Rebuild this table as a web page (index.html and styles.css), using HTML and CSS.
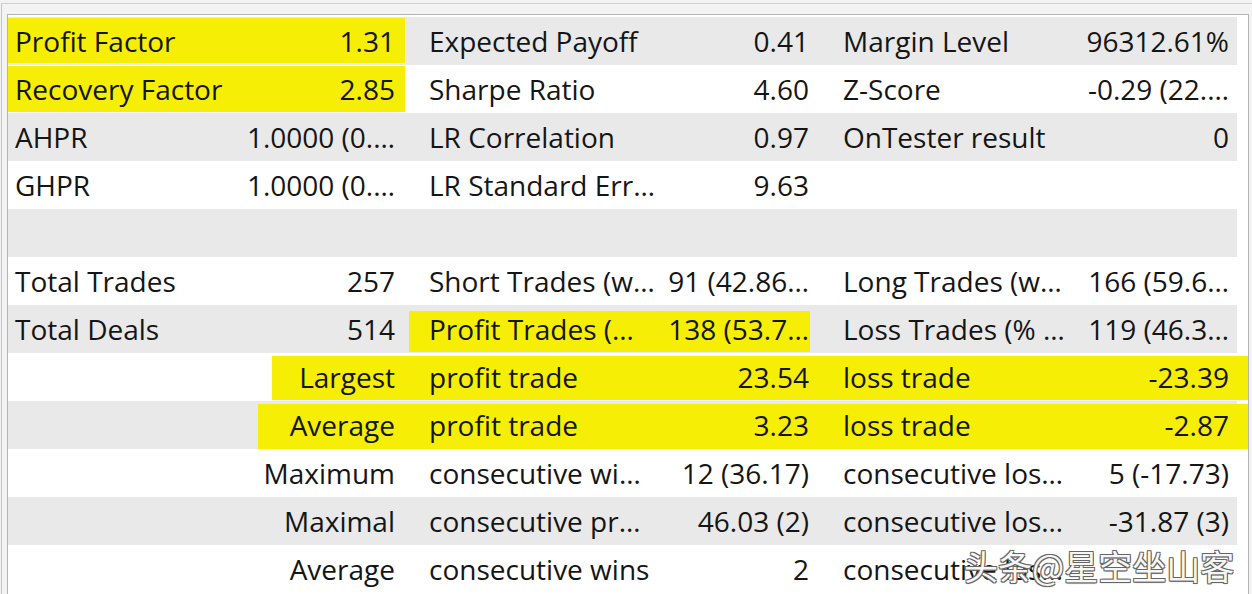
FILE: index.html
```html
<!DOCTYPE html>
<html>
<head>
<meta charset="utf-8">
<link rel="stylesheet" href="styles.css">
</head>
<body>
<div class="window">
  <div class="panel">
    <div class="row alt">
      <div class="hl hl-ab1"></div>
      <div class="c l1">Profit Factor</div><div class="c v1">1.31</div>
      <div class="c l2">Expected Payoff</div><div class="c v2">0.41</div>
      <div class="c l3">Margin Level</div><div class="c v3">96312.61%</div>
    </div>
    <div class="row">
      <div class="hl hl-ab2"></div>
      <div class="c l1">Recovery Factor</div><div class="c v1">2.85</div>
      <div class="c l2">Sharpe Ratio</div><div class="c v2">4.60</div>
      <div class="c l3">Z-Score</div><div class="c v3">-0.29 (22.…</div>
    </div>
    <div class="row alt">
      <div class="c l1">AHPR</div><div class="c v1">1.0000 (0.…</div>
      <div class="c l2">LR Correlation</div><div class="c v2">0.97</div>
      <div class="c l3">OnTester result</div><div class="c v3">0</div>
    </div>
    <div class="row">
      <div class="c l1">GHPR</div><div class="c v1">1.0000 (0.…</div>
      <div class="c l2">LR Standard Err…</div><div class="c v2">9.63</div>
      <div class="c l3"></div><div class="c v3"></div>
    </div>
    <div class="row alt"></div>
    <div class="row">
      <div class="c l1">Total Trades</div><div class="c v1">257</div>
      <div class="c l2">Short Trades (w…</div><div class="c v2">91 (42.86…</div>
      <div class="c l3">Long Trades (w…</div><div class="c v3">166 (59.6…</div>
    </div>
    <div class="row alt">
      <div class="hl hl-cd"></div>
      <div class="c l1">Total Deals</div><div class="c v1">514</div>
      <div class="c l2">Profit Trades (…</div><div class="c v2">138 (53.7…</div>
      <div class="c l3">Loss Trades (% …</div><div class="c v3">119 (46.3…</div>
    </div>
    <div class="row">
      <div class="hl hl-largest"></div>
      <div class="c l1"></div><div class="c v1">Largest</div>
      <div class="c l2">profit trade</div><div class="c v2">23.54</div>
      <div class="c l3">loss trade</div><div class="c v3">-23.39</div>
    </div>
    <div class="row alt">
      <div class="hl hl-average"></div>
      <div class="c l1"></div><div class="c v1">Average</div>
      <div class="c l2">profit trade</div><div class="c v2">3.23</div>
      <div class="c l3">loss trade</div><div class="c v3">-2.87</div>
    </div>
    <div class="row">
      <div class="c l1"></div><div class="c v1">Maximum</div>
      <div class="c l2">consecutive wi…</div><div class="c v2">12 (36.17)</div>
      <div class="c l3">consecutive los…</div><div class="c v3">5 (-17.73)</div>
    </div>
    <div class="row alt">
      <div class="c l1"></div><div class="c v1">Maximal</div>
      <div class="c l2">consecutive pr…</div><div class="c v2">46.03 (2)</div>
      <div class="c l3">consecutive los…</div><div class="c v3">-31.87 (3)</div>
    </div>
    <div class="row">
      <div class="c l1"></div><div class="c v1">Average</div>
      <div class="c l2">consecutive wins</div><div class="c v2">2</div>
      <div class="c l3">consecutive los…</div><div class="c v3"></div>
    </div>
    <div class="watermark">头条@星空坐山客</div>
  </div>
</div>
</body>
</html>
```
FILE: styles.css
```css
html, body {
  margin: 0;
  padding: 0;
}
body {
  width: 1252px;
  height: 594px;
  overflow: hidden;
  background: #f3f3f3;
  font-family: "Open Sans", "Noto Sans", sans-serif;
  color: #151515;
}
.window {
  margin: 3px 0 0 1px;
  border-top: 1px solid #d0d0d0;
  border-left: 1px solid #c4c4c4;
  padding: 10px 3px 0 5px;
}
.panel {
  position: relative;
  height: 577px;
  border: 1px solid #b4b4b4;
  background: #ffffff;
  padding-top: 2px;
  overflow: hidden;
}
.row {
  display: grid;
  grid-template-columns: 237px 164px 251px 163px 252px 162px;
  width: 1229px;
  height: 48px;
  font-size: 28px;
}
.row.alt {
  background: #e9e9e9;
}
.c {
  grid-row: 1;
  display: flex;
  align-items: center;
  white-space: nowrap;
  overflow: hidden;
}
.l1 { grid-column: 1; padding-left: 7px; }
.v1 { grid-column: 2; justify-content: flex-end; padding-right: 14px; }
.l2 { grid-column: 3; padding-left: 20px; }
.v2 { grid-column: 4; justify-content: flex-end; padding-right: 14px; }
.l3 { grid-column: 5; padding-left: 20px; }
.v3 { grid-column: 6; justify-content: flex-end; padding-right: 8px; }
.hl {
  grid-row: 1;
  background: #f7ee05;
}
.hl-ab1 { grid-column: 1 / 3; margin: 1px 4px 2px 0; }
.hl-ab2 { grid-column: 1 / 3; margin: 1px 4px 1px 0; }
.hl-cd { grid-column: 3 / 5; margin: 6px 13px 1px 0; }
.hl-largest { grid-column: 2 / 7; margin: 3px -11px 1px 27px; }
.hl-average { grid-column: 2 / 7; margin: 3px -11px 0 13px; }
.watermark {
  position: absolute;
  left: 956px;
  top: 529px;
  font-family: "Noto Sans CJK SC", sans-serif;
  font-size: 34px;
  line-height: 44px;
  color: #f6f6f6;
  letter-spacing: 0;
  text-shadow: 1px 1px 0 #666, -1px -1px 0 #666, 1px -1px 0 #666, -1px 1px 0 #666, 0 1px 1px #555;
}
```
